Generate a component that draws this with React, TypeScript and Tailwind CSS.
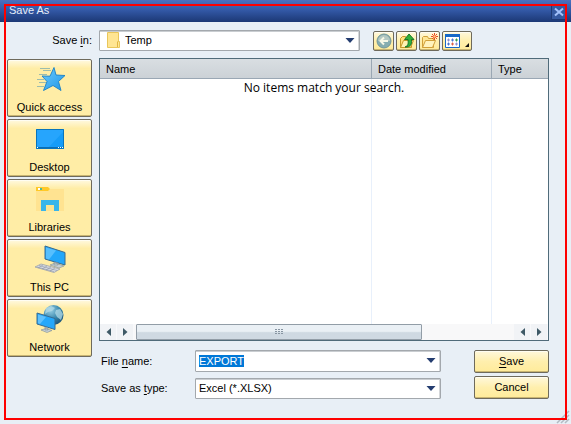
import { useEffect, useRef, type ReactNode } from "react";

const goldEdge =
  "rounded-[2px] border border-[#6e6a5c] shadow-[inset_0_1px_0_#fffdf2,inset_0_-1px_0_#c9b572]";
const goldFace = `bg-linear-to-b from-[#fff8dc] via-[#ffefad] to-[#ffeb9a] ${goldEdge}`;
const placeFace = `bg-linear-to-b from-[#fff9e0] via-[#ffeda6] via-15% to-[#ffeda6] ${goldEdge}`;
const fieldFace =
  "w-full appearance-none rounded-[1px] border border-[#a3a8ad] bg-white text-[11px] text-black shadow-[inset_0_1px_0_#c9cdd1,inset_-1px_0_0_#d4d7da] outline-none";

function DropArrow() {
  return (
    <svg className="pointer-events-none absolute top-[8px] right-[5px]" width="10" height="5" viewBox="0 0 10 5">
      <path d="M0.5 0h9L5 5z" fill="#243d70" />
    </svg>
  );
}

function StarIcon() {
  return (
    <svg width="32" height="28" viewBox="0 0 32 28">
      <defs>
        <linearGradient id="star" x1="0" y1="0" x2="1" y2="1">
          <stop offset="0" stopColor="#6ccbff" />
          <stop offset="1" stopColor="#1f96e6" />
        </linearGradient>
      </defs>
      <path d="M6 3.500h10M9 5.500h8M5 9.500h8M3 14.500h7M5 17.500h7M3 21.500h7" stroke="#9cbcae" />
      <path
        d="M20 2.500l2 7.500 9 .5-6.500 6 2.500 9-8-5L9.500 25.500l3.500-9-5-5.500 8 .2z"
        fill="url(#star)"
        stroke="#187fc5"
        strokeWidth=".9"
      />
    </svg>
  );
}

function DesktopIcon() {
  return (
    <svg width="28" height="20" viewBox="0 0 28 20">
      <path d="M0 0h28v20H0z" fill="#159cf8" />
      <path d="M28 0v2L11 20H0V1z" fill="#2ea9ff" opacity=".7" />
      <path d="M.5.5h27v19H.5z" fill="none" stroke="#0874bd" />
      <path d="M1 18.500h26" stroke="#0b6eb4" />
      <path d="M1 18.500h1M22 18.500h1M24 18.500h1M26 18.500h1" stroke="#fff" />
    </svg>
  );
}

function LibraryIcon() {
  return (
    <svg width="28" height="24" viewBox="0 0 28 24">
      <path d="M0 3h12l2-1h14v22H0z" fill="#ffe391" />
      <path d="M0 0h12l2 2-2 2H0z" fill="#ffc928" />
      <path d="M2 1h4v2H2z" fill="#fff" />
      <path d="M4 1h2v2H4z" fill="#55b89b" />
      <path d="M5 24V13h18v11h-5v-6h-8v6z" fill="#39b5ea" />
    </svg>
  );
}

function ComputerIcon() {
  return (
    <svg width="32" height="28" viewBox="0 0 32 28">
      <path d="M11 1l20 6.500V20L11 14z" fill="#22a7fa" stroke="#376b91" />
      <path d="M12 2.500l10 3-7 9-3-1z" fill="#7bcfff" opacity=".6" />
      <path d="M20 17l4 1v2h-4zM16 20l5-2 9 3-5 2z" fill="#c7d0d5" stroke="#7c8d96" strokeWidth=".6" />
      <path d="M7 19l19 5-6 3.500L1 22z" fill="#d9dde2" stroke="#9299a5" strokeWidth=".7" />
      <path d="M5 20.500l18 5M3 22l17 4.500M9 20l-5 3M13 21l-5 3M17 22l-5 3M21 23l-5 3" stroke="#8e96a8" strokeWidth=".6" />
    </svg>
  );
}

function NetworkIcon() {
  return (
    <svg width="28" height="28" viewBox="0 0 28 28">
      <defs>
        <radialGradient id="globe" cx=".35" cy=".25" r=".8">
          <stop offset="0" stopColor="#9ad1e6" />
          <stop offset=".6" stopColor="#3684a9" />
          <stop offset="1" stopColor="#1b5377" />
        </radialGradient>
      </defs>
      <circle cx="17.500" cy="10" r="10" fill="url(#globe)" />
      <path d="M10 3l5-2 4 2-3 3-4 1-3 2zM20 5l4-1 3 5-2 6-4-3-2-4z" fill="#b4dbe7" opacity=".75" />
      <path d="M1 8l18 5.500v11L1 19z" fill="#25a8fa" stroke="#376b91" />
      <path d="M2 9.500l8 2.500-6 7-2-1z" fill="#86d2ff" opacity=".6" />
      <path d="M9 22l3 1v2H9zM5 25l5-1.500 6 2-5 2z" fill="#c7d0d5" stroke="#7c8d96" strokeWidth=".6" />
    </svg>
  );
}

const places: { name: string; icon: ReactNode }[] = [
  { name: "Quick access", icon: <StarIcon /> },
  { name: "Desktop", icon: <DesktopIcon /> },
  { name: "Libraries", icon: <LibraryIcon /> },
  { name: "This PC", icon: <ComputerIcon /> },
  { name: "Network", icon: <NetworkIcon /> },
];

function FolderIcon() {
  return (
    <svg className="pointer-events-none absolute top-[2px] left-[8px]" width="13" height="16" viewBox="0 0 13 16">
      <path d="M.5.5h11v9h1v6H.5z" fill="#ffe592" stroke="#e9c65a" />
      <path d="M10.500 15V10l1-1" fill="none" stroke="#e0b642" />
    </svg>
  );
}

function ToolButton({ label, wide, children }: { label: string; wide?: boolean; children: ReactNode }) {
  return (
    <button
      type="button"
      aria-label={label}
      className={`flex h-5 items-center justify-center ${wide ? "w-[30px]" : "w-[21px]"} ${goldFace}`}
    >
      {children}
    </button>
  );
}

function Toolbar() {
  return (
    <div className="flex gap-[2px]">
      <ToolButton label="Back">
        <svg width="16" height="16" viewBox="0 0 16 16">
          <circle cx="8" cy="8" r="7" fill="#86adb0" stroke="#73979a" />
          <path d="M2 8a6 6 0 0 1 12 0z" fill="#b3c8c2" />
          <path d="M12 8H5M8 4.500L4.500 8 8 11.500" fill="none" stroke="#f6f7e6" strokeWidth="2" />
        </svg>
      </ToolButton>
      <ToolButton label="Up one level">
        <svg width="16" height="16" viewBox="0 0 16 16">
          <path d="M1.500 14.500V5.500l2-2h3l1 2h5v9z" fill="#ffe07d" stroke="#c79a29" />
          <path d="M1.500 14.500l3-7h10l-3 7z" fill="#fff2b2" stroke="#c79a29" />
          <path d="M6 14c3-1 3.500-3 3-7.500H5.500L10 1l5 5.500h-2.500c.5 5-1 8-6.500 7.500z" fill="#2fb13a" stroke="#126d22" strokeWidth=".9" />
        </svg>
      </ToolButton>
      <ToolButton label="New folder">
        <svg width="17" height="16" viewBox="0 0 17 16">
          <path d="M1.500 14.500v-10l1-1h4l1 2h5v9z" fill="#ffe694" stroke="#d0a03a" />
          <path d="M1.500 14.500l3-7h10l-3 7z" fill="#fff3bd" stroke="#d0a03a" />
          <path d="M13.500 0v7M10 3.500h7M11 1l5 5M16 1l-5 5" stroke="#ea4a26" />
          <circle cx="13.500" cy="3.500" r="1.300" fill="#ffc27c" />
        </svg>
      </ToolButton>
      <ToolButton label="View menu" wide>
        <svg width="26" height="16" viewBox="0 0 26 16">
          <path d="M1.500 1.500h14v13h-14z" fill="#fff" stroke="#1668c7" />
          <path d="M1 1h15v3H1z" fill="#1668c7" />
          <path d="M4 6h1v2H4zM12 10h1v2h-1z" fill="#8a8fd0" stroke="#8a8fd0" />
          <path d="M8 6h1v2H8zM4 10h1v2H4z" fill="#4775cf" stroke="#4775cf" />
          <path d="M12 6h1v2h-1z" fill="#359b4c" stroke="#359b4c" />
          <path d="M8 10h1v2H8z" fill="#dd6047" stroke="#dd6047" />
          <path d="M25 10v4h-4z" fill="#111" />
        </svg>
      </ToolButton>
    </div>
  );
}

function ScrollButton({ left }: { left?: boolean }) {
  return (
    <button
      type="button"
      aria-label={left ? "Scroll left" : "Scroll right"}
      className="flex w-[17px] shrink-0 items-center justify-center border-r border-[#f8f9fb] bg-[#f1f3f6]"
    >
      <svg width="5" height="8" viewBox="0 0 5 8">
        <path d={left ? "M5 0v8L0.500 4z" : "M0 0v8L4.500 4z"} fill="#3e5966" />
      </svg>
    </button>
  );
}

function FileList() {
  const head = "h-[19px] border-b border-[#9aa7b4] px-[6px] pt-[2px] text-left font-normal";
  return (
    <section className="flex min-h-[240px] flex-1 flex-col border border-[#506b7a] bg-white">
      <div className="relative grid flex-1">
        <table className="h-full w-full table-fixed border-separate border-spacing-0">
          <thead className="bg-linear-to-b from-[#d9dee2] to-[#cbd1d6]">
            <tr>
              <th className={`border-r ${head}`}>Name</th>
              <th className={`w-[120px] border-r ${head}`}>Date modified</th>
              <th className={`w-[56px] ${head}`}>Type</th>
            </tr>
          </thead>
          <tbody>
            <tr>
              <td className="border-r border-[#e8f0fb]" />
              <td className="border-r border-[#e8f0fb]" />
              <td />
            </tr>
          </tbody>
        </table>
        <p className="absolute inset-x-0 top-[20px] text-center font-['Open_Sans',sans-serif] text-xs leading-[18px]">
          No items match your search.
        </p>
      </div>
      <div className="flex h-4 bg-[#f8f8f9]">
        <ScrollButton left />
        <ScrollButton />
        <div className="flex flex-1 px-[2px]">
          <div className="flex w-[76%] items-center justify-center rounded-[1px] border border-[#929da7] bg-linear-to-b from-[#eaf0f5] from-45% to-[#cfd9e2] to-55%">
            <svg width="8" height="6" viewBox="0 0 8 6">
              <path d="M0 .5h8M0 2.500h8M0 4.500h8" stroke="#8794a1" strokeDasharray="2 1" />
            </svg>
          </div>
        </div>
        <ScrollButton left />
        <ScrollButton />
      </div>
    </section>
  );
}

export default function App() {
  const fileName = useRef<HTMLInputElement>(null);

  useEffect(() => {
    fileName.current?.focus();
    fileName.current?.select();
  }, []);

  return (
    <div className="relative flex min-h-screen flex-col bg-[#e8eff6] font-['Liberation_Sans',Arial,sans-serif] text-[11px] text-black">
      <header className="flex h-[22px] items-center justify-between bg-linear-to-b from-[#4a71c0] via-[#3156a3] to-[#1c3875] pr-1 pl-[9px]">
        <h1 className="pb-[2px] text-[#e6edf9]">Save As</h1>
        <button
          type="button"
          aria-label="Close"
          className="mt-[2px] flex h-4 w-4 items-center justify-center border border-[#1e3973] bg-[#3559a0]"
        >
          <svg width="10" height="10" viewBox="0 0 10 10">
            <path d="M1 1.500l8 7M9 1.500l-8 7" stroke="#a3c1fb" strokeWidth="2" />
          </svg>
        </button>
      </header>

      <form className="flex flex-1 flex-col pt-2 pr-[22px] pb-[25px] pl-[7px]" onSubmit={(e) => e.preventDefault()}>
        <div className="flex items-center gap-[7px]">
          <label htmlFor="folder" className="w-[85px] text-right">
            Save <u className="underline-offset-2">i</u>n:
          </label>
          <div className="relative w-[261px]">
            <select id="folder" className={`h-[21px] pl-[25px] ${fieldFace}`}>
              <option>Temp</option>
            </select>
            <FolderIcon />
            <DropArrow />
          </div>
          <div className="ml-[6px]">
            <Toolbar />
          </div>
        </div>

        <div className="mt-[7px] flex flex-1 gap-[7px]">
          <nav className="flex w-[85px] shrink-0 flex-col gap-[2px] pt-px">
            {places.map((place) => (
              <button
                key={place.name}
                type="button"
                className={`flex h-[58px] flex-col items-center ${placeFace}`}
              >
                <span className="flex flex-1 items-center">{place.icon}</span>
                <span className="leading-[18px]">{place.name}</span>
              </button>
            ))}
          </nav>

          <div className="flex min-w-0 flex-1 flex-col gap-[9px]">
            <FileList />
            <div className="flex gap-[33px]">
              <div className="grid flex-1 grid-cols-[94px_1fr] items-center gap-x-[2px] gap-y-[6px]">
                <label htmlFor="file-name" className="pl-[2px]">
                  File <u className="underline-offset-2">n</u>ame:
                </label>
                <div className="relative">
                  <input
                    id="file-name"
                    ref={fileName}
                    defaultValue="EXPORT"
                    className={`block h-[22px] pr-5 pl-[3px] selection:bg-[#0078d7] selection:text-white ${fieldFace}`}
                  />
                  <DropArrow />
                </div>
                <label htmlFor="file-type" className="pl-[2px]">
                  Save as <u className="underline-offset-2">t</u>ype:
                </label>
                <div className="relative">
                  <select id="file-type" className={`block h-[21px] pl-[3px] ${fieldFace}`}>
                    <option>Excel (*.XLSX)</option>
                  </select>
                  <DropArrow />
                </div>
              </div>
              <div className="flex w-[75px] flex-col gap-[3px]">
                <button type="submit" className={`h-[23px] ${goldFace}`}>
                  <u className="underline-offset-2">S</u>ave
                </button>
                <button type="button" className={`h-[23px] ${goldFace}`}>
                  Cancel
                </button>
              </div>
            </div>
          </div>
        </div>
      </form>

      <svg className="absolute right-0 bottom-0" width="16" height="16" viewBox="0 0 16 16">
        <path d="M2 15L14 3M6 15l8-8M10 15l4-4" stroke="#b3bac2" strokeWidth="1.500" />
      </svg>
      <div className="pointer-events-none absolute inset-1 border-2 border-[#fe0000]" />
    </div>
  );
}
